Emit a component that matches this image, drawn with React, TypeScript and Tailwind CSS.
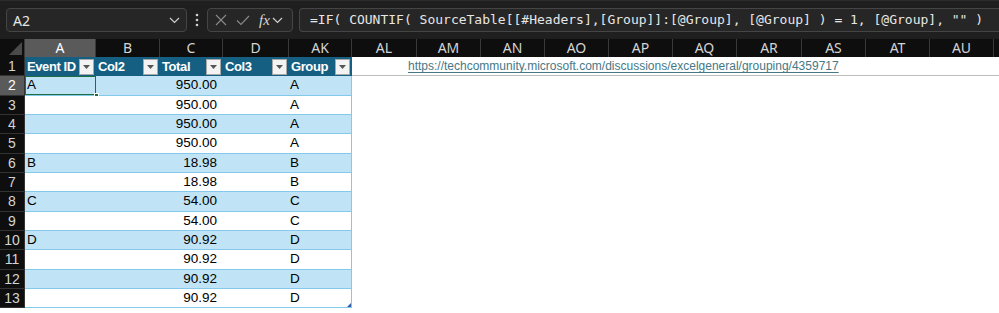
import React from "react";

const rows: [string, string, string][] = [
  ["A", "950.00", "A"],
  ["", "950.00", "A"],
  ["", "950.00", "A"],
  ["", "950.00", "A"],
  ["B", "18.98", "B"],
  ["", "18.98", "B"],
  ["C", "54.00", "C"],
  ["", "54.00", "C"],
  ["D", "90.92", "D"],
  ["", "90.92", "D"],
  ["", "90.92", "D"],
  ["", "90.92", "D"],
];

const tableCols = [
  { name: "A", w: "w-[71px]", head: "Event ID" },
  { name: "B", w: "w-[64px]", head: "Col2" },
  { name: "C", w: "w-[63px]", head: "Total" },
  { name: "D", w: "w-[66px]", head: "Col3" },
  { name: "AK", w: "w-[63px]", head: "Group" },
];

const restCols = [
  { name: "AL", w: "w-[65px]" },
  { name: "AM", w: "w-[64px]" },
  { name: "AN", w: "w-[64px]" },
  { name: "AO", w: "w-[64px]" },
  { name: "AP", w: "w-[64px]" },
  { name: "AQ", w: "w-[64px]" },
  { name: "AR", w: "w-[65px]" },
  { name: "AS", w: "w-[64px]" },
  { name: "AT", w: "w-[64px]" },
  { name: "AU", w: "w-[64px]" },
];

function Chevron({ className }: { className?: string }) {
  return (
    <svg className={className} width="11" height="7" viewBox="0 0 11 7" fill="none">
      <path d="M1 1l4.5 4.5L10 1" stroke="#cfcfcf" strokeWidth="1.2" />
    </svg>
  );
}

function FilterButton() {
  return (
    <span className="flex h-[16px] w-[15px] shrink-0 items-center justify-center border border-[#a8a8a8] bg-[#f3f3f3]">
      <svg width="7" height="4" viewBox="0 0 7 4">
        <path d="M0 0h7L3.5 4z" fill="#555" />
      </svg>
    </span>
  );
}

function FormulaBar() {
  return (
    <div className="flex h-[39px] items-center gap-[6px] border-t border-[#2c2c2c] bg-[#1f1f1f] pl-[6px]">
      <div className="flex h-[24px] w-[181px] items-center justify-between rounded-[4px] border border-[#454545] bg-[#262626] pl-[6px] pr-[6px]">
        <span className="text-[14px] text-[#e6e6e6]">A2</span>
        <Chevron />
      </div>
      <svg width="4" height="14" viewBox="0 0 4 14" className="mx-[2px]">
        <circle cx="2" cy="2" r="1.3" fill="#cfcfcf" />
        <circle cx="2" cy="7" r="1.3" fill="#cfcfcf" />
        <circle cx="2" cy="12" r="1.3" fill="#cfcfcf" />
      </svg>
      <div className="flex h-[24px] w-[86px] items-center gap-[9px] rounded-[4px] border border-[#454545] bg-[#262626] pl-[7px]">
        <svg width="12" height="12" viewBox="0 0 12 12">
          <path d="M1 1l10 10M11 1L1 11" stroke="#8a8a8a" strokeWidth="1.1" />
        </svg>
        <svg width="14" height="11" viewBox="0 0 14 11" fill="none">
          <path d="M1 5.5l4 4L13 1" stroke="#8a8a8a" strokeWidth="1.1" />
        </svg>
        <span className="flex items-center gap-[2px]">
          <span className="font-['Liberation_Serif',serif] text-[15px] italic text-[#d8d8d8]">fx</span>
          <Chevron />
        </span>
      </div>
      <div className="flex h-[24px] flex-1 items-center rounded-l-[4px] border border-r-0 border-[#454545] bg-[#262626] pl-[10px]">
        <span className="whitespace-pre font-['DejaVu_Sans_Mono',monospace] text-[13px] text-[#e6e6e6]">
          {'=IF( COUNTIF( SourceTable[[#Headers],[Group]]:[@Group], [@Group] ) = 1, [@Group], "" )'}
        </span>
      </div>
    </div>
  );
}

function ColumnHeaders() {
  return (
    <div className="flex h-[18px] bg-[#0e0e0e] text-[14px] text-[#d4d4d4]">
      <div className="relative w-[25px] shrink-0 border-r border-[#3a3a3a]">
        <svg className="absolute bottom-[2px] right-[2px]" width="13" height="13" viewBox="0 0 13 13">
          <path d="M13 0v13H0z" fill="#4a4a4a" />
        </svg>
      </div>
      {tableCols.map((c, i) => (
        <div
          key={c.name}
          className={`${c.w} flex shrink-0 items-center justify-center border-r border-[#3a3a3a] leading-none ${
            i === 0 ? "bg-[#5a5a5a] text-white" : ""
          }`}
        >
          {c.name}
        </div>
      ))}
      {restCols.map((c) => (
        <div key={c.name} className={`${c.w} flex shrink-0 items-center justify-center border-r border-[#3a3a3a] leading-none`}>
          {c.name}
        </div>
      ))}
      <div className="flex-1" />
    </div>
  );
}

function RowHeader({ n, active }: { n: number; active?: boolean }) {
  return (
    <div
      className={`flex h-full w-[25px] shrink-0 items-center justify-center border-b border-r border-[#333] text-[14px] leading-none ${
        active ? "bg-[#5a5a5a] text-white" : "bg-[#0e0e0e] text-[#d4d4d4]"
      }`}
    >
      {n}
    </div>
  );
}

export default function App() {
  return (
    <div className="h-[313px] w-[999px] overflow-hidden bg-white font-['Noto_Sans',sans-serif]">
      <FormulaBar />
      <ColumnHeaders />

      <div className="font-['Liberation_Sans',Arial,sans-serif] text-[13.5px] text-black">
        {/* row 1: table header + link */}
        <div className="flex h-[19.33px]">
          <RowHeader n={1} />
          <div className="flex bg-[#156082] font-bold text-white">
            {tableCols.map((c) => (
              <div key={c.name} className={`${c.w} flex shrink-0 items-center justify-between gap-[1px] pl-[2px] pr-[2px]`}>
                <span className="whitespace-nowrap text-[13px] leading-none tracking-[-0.4px]">{c.head}</span>
                <FilterButton />
              </div>
            ))}
          </div>
          <div className="flex flex-1 items-center border-b border-[#bdbdbd] pl-[56px]">
            <span className="whitespace-nowrap text-[12px] text-[#467886] underline decoration-1 underline-offset-2">
              https://techcommunity.microsoft.com/discussions/excelgeneral/grouping/4359717
            </span>
          </div>
        </div>

        {rows.map((r, i) => {
          const banded = i % 2 === 0;
          const last = i === rows.length - 1;
          return (
            <div key={i} className="flex h-[19.33px]">
              <RowHeader n={i + 2} active={i === 0} />
              <div
                className={`relative flex border-b border-r border-[#83c9ec] ${banded ? "bg-[#c0e4f5]" : "bg-white"}`}
              >
                <div
                  className={`relative flex w-[71px] shrink-0 items-center pl-[2px] ${
                    i === 0 ? "outline outline-1 outline-[#1e6e42] -outline-offset-1" : ""
                  }`}
                >
                  {r[0]}
                  {i === 0 && (
                    <span className="absolute bottom-[-3px] right-[-3px] h-[5px] w-[5px] border border-white bg-[#1e6e42]" />
                  )}
                </div>
                <div className="w-[64px] shrink-0" />
                <div className="flex w-[63px] shrink-0 items-center justify-end pr-[6px]">{r[1]}</div>
                <div className="w-[66px] shrink-0" />
                <div className="flex w-[62px] shrink-0 items-center pl-[1px]">{r[2]}</div>
                {last && (
                  <svg className="absolute bottom-[0px] right-[0px]" width="4" height="4" viewBox="0 0 4 4">
                    <path d="M4 0v4H0z" fill="#2e5fa8" />
                  </svg>
                )}
              </div>
              <div className="flex-1" />
            </div>
          );
        })}
      </div>
    </div>
  );
}
